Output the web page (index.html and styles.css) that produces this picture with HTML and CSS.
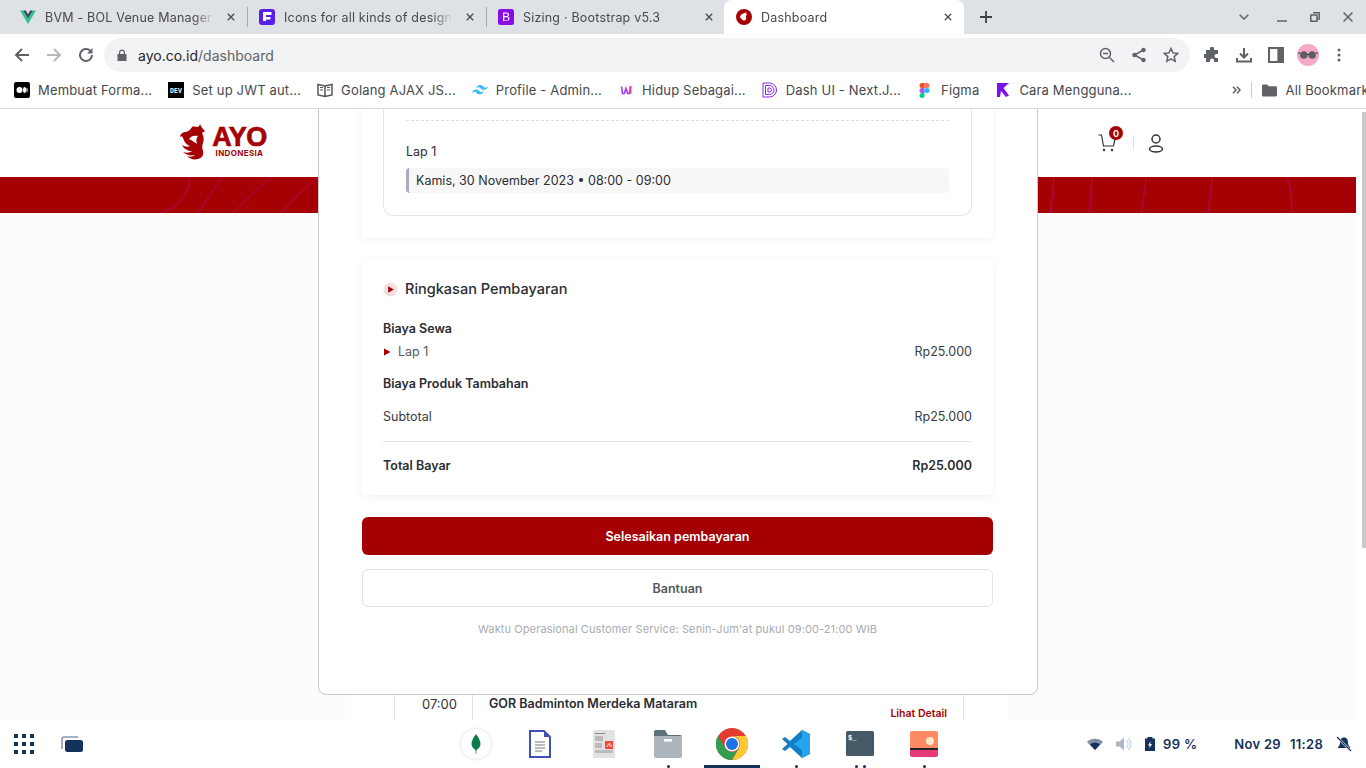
FILE: index.html
```html
<!DOCTYPE html>
<html lang="id">
<head>
<meta charset="utf-8">
<title>Dashboard</title>
<link rel="stylesheet" href="styles.css">
</head>
<body>
<div class="browser">
  <div class="tabbar">
    <div class="tab">
      <svg class="fav" viewBox="0 0 16 16"><path d="M0 1.5h3.2L8 9.5l4.8-8H16L8 15z" fill="#2fc28c"/><path d="M3.2 1.5h2.6L8 5.2l2.2-3.7h2.6L8 9.5z" fill="#34495e"/></svg>
      <span class="tab-title">BVM - BOL Venue Manager</span>
      <svg class="tab-x" viewBox="0 0 10 10"><path d="M1 1l8 8M9 1l-8 8"/></svg>
    </div>
    <i class="tab-sep"></i>
    <div class="tab">
      <svg class="fav" viewBox="0 0 16 16"><rect width="16" height="16" rx="3" fill="#5a1fe6"/><path d="M4 3h8.500v3H7v2h4.500v2.500H7V12H4z" fill="#fff"/></svg>
      <span class="tab-title">Icons for all kinds of design</span>
      <svg class="tab-x" viewBox="0 0 10 10"><path d="M1 1l8 8M9 1l-8 8"/></svg>
    </div>
    <i class="tab-sep"></i>
    <div class="tab">
      <svg class="fav" viewBox="0 0 16 16"><rect width="16" height="16" rx="2.500" fill="#8b0be8"/><path d="M5 3.500h3.600c1.500 0 2.400.8 2.400 2.100 0 .9-.5 1.600-1.300 1.800 1.100.2 1.800 1 1.800 2.100 0 1.500-1.100 2.500-2.800 2.500H5zM6.300 4.600v2.500h2c1 0 1.500-.5 1.500-1.300 0-.8-.5-1.200-1.400-1.200zM6.300 8.200v3.200h2.300c1.100 0 1.700-.6 1.700-1.600s-.7-1.600-1.900-1.600z" fill="#fff"/></svg>
      <span class="tab-title">Sizing · Bootstrap v5.3</span>
      <svg class="tab-x" viewBox="0 0 10 10"><path d="M1 1l8 8M9 1l-8 8"/></svg>
    </div>
    <div class="tab tab-active">
      <svg class="fav" viewBox="0 0 16 16"><circle cx="8" cy="8" r="8" fill="#a50104"/><path d="M4 8.500c0-2.500 2.500-4.500 6.500-5-.5 1-.2 1.500.5 2.500-1.500 0-1.500 1-1 2 .5 1.200 0 3-1.500 3.500C6.500 12 6 10 4 8.500z" fill="#fff"/></svg>
      <span class="tab-title">Dashboard</span>
      <svg class="tab-x" viewBox="0 0 10 10"><path d="M1 1l8 8M9 1l-8 8"/></svg>
    </div>
    <svg class="tab-plus" viewBox="0 0 12 12"><path d="M6 0v12M0 6h12"/></svg>
    <div class="win-controls">
      <svg class="win-icon win-chev" viewBox="0 0 10 6"><path d="M.7.7L5 5l4.300-4.300"/></svg>
      <svg class="win-icon win-min" viewBox="0 0 10 10"><path d="M0 9h10"/></svg>
      <svg class="win-icon win-max" viewBox="0 0 10 10"><path d="M3 .8h6.200V7H7M.8 3H7v6.200H.8z"/></svg>
      <svg class="win-icon win-close" viewBox="0 0 10 10"><path d="M.5.5l9 9M9.500.5l-9 9"/></svg>
    </div>
  </div>

  <div class="toolbar">
    <svg class="nav-icon" viewBox="0 0 16 16"><path class="st" d="M15 8H2M8 2L2 8l6 6"/></svg>
    <svg class="nav-icon nav-off" viewBox="0 0 16 16"><path class="st" d="M1 8h13M8 2l6 6-6 6"/></svg>
    <svg class="nav-icon" viewBox="0 0 16 16"><path class="st" d="M14 8a6 6 0 1 1-1.800-4.300"/><path d="M14.500 1v5.500H9z" fill="#5f6368"/></svg>
    <div class="omnibox">
      <svg class="lock" viewBox="0 0 10 12"><path d="M2 5V3.500a3 3 0 0 1 6 0V5h1.500v7H.5V5zm1.200 0h3.600V3.500a1.800 1.800 0 0 0-3.600 0z" fill="#5f6368"/></svg>
      <span class="url"><b>ayo.co.id</b>/dashboard</span>
      <svg class="omni-icon" viewBox="0 0 16 16"><circle class="st-thin" cx="6.500" cy="6.500" r="5"/><path class="st-thin" d="M10.200 10.200L15 15M4 6.500h5"/></svg>
      <svg class="omni-icon" viewBox="0 0 16 16"><path class="st-thin" d="M12.500 3L3.500 8l9 5"/><circle cx="12.500" cy="3" r="2.200" fill="#5f6368"/><circle cx="3.500" cy="8" r="2.200" fill="#5f6368"/><circle cx="12.500" cy="13" r="2.200" fill="#5f6368"/></svg>
      <svg class="omni-icon" viewBox="0 0 16 16"><path class="st-thin" d="M8 1.500l2 4.400 4.700.5-3.500 3.200 1 4.700L8 11.900l-4.200 2.400 1-4.700L1.300 6.400 6 5.900z"/></svg>
    </div>
    <div class="tool-actions">
      <svg class="tool-icon" viewBox="0 0 16 16"><path d="M6 1.500a2 2 0 0 1 4 0V3h4v4h-1.500a2 2 0 0 0 0 4H14v4h-4v-1.500a2 2 0 0 0-4 0V15H2v-4H.5a2 2 0 0 1 0-4H2V3h4z" fill="#5f6368"/></svg>
      <svg class="tool-icon" viewBox="0 0 16 16"><path class="st" d="M8 1v9M4 6.500L8 10.500l4-4M1 11v3.500h14V11"/></svg>
      <svg class="tool-icon" viewBox="0 0 14 14"><path d="M0 0h14v14H0zM1.800 1.800v10.400h6.400V1.800z" fill="#5f6368"/></svg>
      <svg class="avatar" viewBox="0 0 22 22"><circle cx="11" cy="11" r="11" fill="#f7a8c6"/><circle cx="6.800" cy="11" r="3.800" fill="#5b5f60"/><circle cx="15.200" cy="11" r="3.800" fill="#5b5f60"/><path d="M1 9.500l2-1M21 9.500l-2-1M10 10.500h2" stroke="#333" fill="none"/></svg>
      <svg class="tool-menu" viewBox="0 0 4 14"><circle cx="2" cy="2" r="1.500"/><circle cx="2" cy="7" r="1.500"/><circle cx="2" cy="12" r="1.500"/></svg>
    </div>
  </div>

  <div class="bookmarks">
    <span class="bm"><svg class="bm-icon" viewBox="0 0 16 16"><rect width="16" height="16" rx="2" fill="#000"/><circle cx="5.500" cy="8" r="3" fill="#fff"/><ellipse cx="10.500" cy="8" rx="1.500" ry="3" fill="#fff"/><ellipse cx="13" cy="8" rx=".6" ry="2.600" fill="#fff"/></svg>Membuat Forma...</span>
    <span class="bm"><svg class="bm-icon" viewBox="0 0 16 16"><rect width="16" height="16" fill="#000"/><text x="8" y="10.500" class="dev">DEV</text></svg>Set up JWT aut...</span>
    <span class="bm"><svg class="bm-icon" viewBox="0 0 16 16"><path d="M1 2.500l7 1.500 7-1.500v10.500l-7 1.500-7-1.500zM8 4v10.500" fill="none" stroke="#555" stroke-width="1.500"/><path d="M3 5.500h3M3 8h3M10 5.500h3M10 8h3" stroke="#555"/></svg>Golang AJAX JS...</span>
    <span class="bm"><svg class="bm-icon" viewBox="0 0 16 16"><path d="M4 6.500C4.600 4.200 6 3 8 3c3 0 3.400 2.200 5 2.600 1 .2 2-.2 3-1.300-.6 2.300-2 3.500-4 3.500-3 0-3.400-2.200-5-2.600-1-.2-2 .2-3 1.300zM0 11c.6-2.300 2-3.500 4-3.500 3 0 3.400 2.200 5 2.600 1 .2 2-.2 3-1.300-.6 2.300-2 3.500-4 3.500-3 0-3.400-2.200-5-2.600-1-.2-2 .2-3 1.300z" fill="#38bdf8"/></svg>Profile - Admin...</span>
    <span class="bm"><svg class="bm-icon" viewBox="0 0 16 16"><rect width="16" height="16" rx="2" fill="#fbfbfd"/><path d="M3.500 4.500l1 7h1.800l1.700-5 1.700 5h1.800l1-7" fill="none" stroke="#a03cf0" stroke-width="1.600"/><path d="M12.500 4v7.500" stroke="#ef2f88" stroke-width="1.600"/></svg>Hidup Sebagai...</span>
    <span class="bm"><svg class="bm-icon" viewBox="0 0 16 16"><path d="M1 1h6.500a7 7 0 0 1 0 14H1zM3.500 3.500h4a4.500 4.500 0 0 1 0 9h-4zM6 6h1.500a2 2 0 0 1 0 4H6z" fill="none" stroke="#8a27f0" stroke-width="1"/></svg>Dash UI - Next.J...</span>
    <span class="bm"><svg class="bm-icon bm-figma" viewBox="0 0 10 15"><path d="M5 0H2.500a2.500 2.500 0 0 0 0 5H5z" fill="#f24e1e"/><path d="M5 0h2.500a2.500 2.500 0 0 1 0 5H5z" fill="#ff7262"/><path d="M5 5H2.500a2.500 2.500 0 0 0 0 5H5z" fill="#a259ff"/><circle cx="7.500" cy="7.500" r="2.500" fill="#1abcfe"/><path d="M5 10H2.500A2.500 2.500 0 1 0 5 12.500z" fill="#0acf83"/></svg>Figma</span>
    <span class="bm"><svg class="bm-icon" viewBox="0 0 16 16"><path d="M2 1h12L8.500 6 14 13.500 11 15 6 9l-1 6H2z" fill="#7a12f0"/></svg>Cara Mengguna...</span>
    <svg class="bm-more" viewBox="0 0 9 8"><path d="M1 .7L4 4 1 7.300M5 .7L8 4 5 7.300"/></svg>
    <i class="bm-sep"></i>
    <span class="bm bm-all"><svg class="bm-folder" viewBox="0 0 16 13"><path d="M0 1.500A1.500 1.500 0 0 1 1.500 0h4L7 2h7.500A1.500 1.500 0 0 1 16 3.500v8a1.500 1.500 0 0 1-1.500 1.500h-13A1.500 1.500 0 0 1 0 11.500z" fill="#5f6368"/></svg>All Bookmarks</span>
  </div>

  <div class="viewport">
    <div class="page">
      <header class="site-header">
        <div class="logo">
          <svg class="logo-bird" viewBox="0 0 28 36"><path d="M20 0c1 3 3 5 5 7l-3 2c2 4 2 7 1 10-1 2-1 5 0 8 1 4-1 7-5 8-4 1-8 0-11-3 3 1 6 1 8-1-4 1-9 0-12-3 3 1 7 1 9-1-4 0-8-2-10-6 3 2 6 2 8 1-3-1-6-4-7-8-1-2-2-2-3-1 0-3 3-5 6-5 3-1 5-3 6-5 2-1 4 0 6 0 1-1 2-2 2-3z" fill="#a50104"/><path d="M9 15c2-3 5-4 9-3-2 2-2 5-1 8-3-2-5-4-8-5z" fill="#fff"/></svg>
          <div class="logo-text"><span class="logo-ayo">AYO</span><span class="logo-sub">INDONESIA</span></div>
        </div>
        <div class="header-actions">
          <span class="cart">
            <svg class="cart-icon" viewBox="0 0 18 18"><path d="M.5 1h3l2 11h10l1.500-7" fill="none" stroke="#333" stroke-width="1.200"/><circle cx="6" cy="16" r="1.200" fill="#333"/><circle cx="14" cy="16" r="1.200" fill="#333"/></svg>
            <span class="badge">0</span>
          </span>
          <i class="header-sep"></i>
          <svg class="user-icon" viewBox="0 0 16 19"><circle cx="8" cy="5" r="4" fill="none" stroke="#333" stroke-width="1.500"/><ellipse cx="8" cy="15" rx="6.500" ry="3" fill="none" stroke="#333" stroke-width="1.500"/></svg>
        </div>
      </header>
      <div class="band">
        <svg class="band-lines" viewBox="0 0 1356 36" preserveAspectRatio="none"><path d="M160 36c20-6 28-20 30-36M198 36c8-12 16-24 24-36M233 36c12-12 24-24 38-36M280 36c12-12 24-24 38-36M1050 36c2-12 3-24 4-36M1090 36c0-12 1-24 2-36M1141 36c2-12 4-24 5-36M1208 36c2-12 3-24 4-36M1291 36c2-12 0-24-4-36" fill="none" stroke="#b3065c" stroke-width="1"/></svg>
      </div>
      <section class="list-card">
        <div class="list-row">
          <span class="list-time">07:00</span>
          <div class="list-main">GOR Badminton Merdeka Mataram</div>
          <a class="list-link">Lihat Detail</a>
        </div>
      </section>
    </div>

    <div class="modal">
      <div class="panel panel-top">
        <div class="booking-box">
          <div class="dashed"></div>
          <div class="court">Lap 1</div>
          <div class="slot">Kamis, 30 November 2023 • 08:00 - 09:00</div>
        </div>
      </div>
      <div class="panel panel-summary">
        <h2 class="summary-title"><svg class="dot-icon" viewBox="0 0 16 16"><circle cx="8" cy="8" r="7.500" fill="#f5dfe0"/><path d="M5.500 4.500L11.500 8l-6 3.500z" fill="#a50104"/></svg>Ringkasan Pembayaran</h2>
        <div class="sum-head sum-first">Biaya Sewa</div>
        <div class="sum-row sum-item"><span class="sum-lap"><svg class="tri" viewBox="0 0 8 8"><path d="M1 .5L7.500 4 1 7.500z" fill="#a50104"/></svg>Lap 1</span><span>Rp25.000</span></div>
        <div class="sum-head sum-second">Biaya Produk Tambahan</div>
        <div class="sum-row sum-sub"><span>Subtotal</span><span>Rp25.000</span></div>
        <div class="sum-row sum-total"><span>Total Bayar</span><span>Rp25.000</span></div>
      </div>
      <button class="btn btn-pay">Selesaikan pembayaran</button>
      <button class="btn btn-help">Bantuan</button>
      <p class="note">Waktu Operasional Customer Service: Senin-Jum'at pukul 09:00-21:00 WIB</p>
    </div>

    <div class="scrollbar"><i class="thumb"></i></div>
  </div>

  <footer class="taskbar">
    <div class="task-left">
      <svg class="grid-icon" viewBox="0 0 20 20"><g fill="#14335a"><rect width="4" height="4"/><rect x="8" width="4" height="4"/><rect x="16" width="4" height="4"/><rect y="8" width="4" height="4"/><rect x="8" y="8" width="4" height="4"/><rect x="16" y="8" width="4" height="4"/><rect y="16" width="4" height="4"/><rect x="8" y="16" width="4" height="4"/><rect x="16" y="16" width="4" height="4"/></g></svg>
      <svg class="win-stack" viewBox="0 0 22 16"><path d="M1 13V3a2 2 0 0 1 2-2h14" fill="none" stroke="#8797ab" stroke-width="1.500"/><rect x="4" y="4" width="18" height="12" rx="2.500" fill="#14335a"/></svg>
    </div>
    <div class="dock">
      <span class="dock-item"><span class="mongo"><svg viewBox="0 0 10 20"><path d="M5 0c3 4 4.500 7 4.500 10S7 15 5.500 16L5.200 20h-.5L4.500 16C3 15 .5 13 .5 10S2 4 5 0z" fill="#0f7a4d"/></svg></span></span>
      <span class="dock-item"><svg class="dock-svg" viewBox="0 0 22 28"><path d="M1 1h14l6 6v20H1z" fill="#fff" stroke="#4050b5" stroke-width="2"/><path d="M15 1l6 6h-6z" fill="#4050b5"/><path d="M6 12h10M6 15h10M6 18h10M6 21h7" stroke="#777"/></svg></span>
      <span class="dock-item"><svg class="dock-svg" viewBox="0 0 22 28"><rect width="22" height="28" rx="1.500" fill="#e2e2e2"/><path d="M2 3h10v1H2z" fill="#888"/><path d="M2 6h8v5H2zM2 13h7v5H2zM2 20h18v3H2z" fill="#bbb"/><rect x="12" y="11" width="8" height="8" fill="#f2473a"/><path d="M14 17c1-3 3-5 3-3s-2 2 2 2" stroke="#fff" fill="none"/></svg></span>
      <span class="dock-item dock-dot"><svg class="dock-svg dock-wide" viewBox="0 0 28 28"><path d="M0 2a2 2 0 0 1 2-2h9l3 5h12a2 2 0 0 1 2 2v6H0z" fill="#5d707d"/><path d="M0 6h28v20a2 2 0 0 1-2 2H2a2 2 0 0 1-2-2z" fill="#acb6bc"/><rect x="10" y="9" width="8" height="2.500" fill="#fff"/></svg></span>
      <span class="dock-item dock-active"><svg class="dock-chrome" viewBox="0 0 32 32"><circle cx="16" cy="16" r="16" fill="#e33b2e"/><path d="M16 32A16 16 0 0 0 29.900 8H16a8 8 0 0 1 6.900 12z" fill="#fcc934"/><path d="M2.100 8A16 16 0 0 0 16 32l6.900-12A8 8 0 0 1 9.100 20z" fill="#319f4f"/><circle cx="16" cy="16" r="7.500" fill="#fff"/><circle cx="16" cy="16" r="6" fill="#1a73e8"/></svg></span>
      <span class="dock-item dock-dot"><svg class="dock-svg dock-wide" viewBox="0 0 28 28"><path d="M20 0l8 4v20l-8 4L8 17l-5 4-3-2 5.500-5L0 9l3-2 5 4z" fill="#0f7fc7"/><path d="M20 0l8 4v20l-8 4zM20 7.500L12 14l8 6.500z" fill="#26a4ee" fill-rule="evenodd"/></svg></span>
      <span class="dock-item dock-dots"><svg class="dock-svg dock-wide" viewBox="0 0 28 26"><rect width="28" height="25" rx="1.500" fill="#455a66"/><text x="2" y="9" class="term">$_</text></svg></span>
      <span class="dock-item dock-dot"><svg class="dock-svg dock-wide" viewBox="0 0 28 26"><path d="M0 2a2 2 0 0 1 2-2h24a2 2 0 0 1 2 2v15H0z" fill="#ff8a65"/><circle cx="20" cy="10" r="4" fill="#ffe9c8"/><path d="M0 17h28v3H0z" fill="#222"/><path d="M0 19h28v5a2 2 0 0 1-2 2H2a2 2 0 0 1-2-2z" fill="#e63a78"/></svg></span>
    </div>
    <div class="tray">
      <svg class="tray-wifi" viewBox="0 0 16 12"><path d="M0 4a11.500 11.500 0 0 1 16 0l-8 8z" fill="#14335a" opacity=".55"/><path d="M3 6.500a7 7 0 0 1 10 0l-5 5.500z" fill="#14335a"/></svg>
      <svg class="tray-vol" viewBox="0 0 16 14"><path d="M0 4.500h3.500L8 .5v13l-4.500-4H0z" fill="#acb8c5"/><path d="M10.500 3.500a4.500 4.500 0 0 1 0 7M12.500 1.500a7.500 7.500 0 0 1 0 11" fill="none" stroke="#c9d2db" stroke-width="1.300"/></svg>
      <svg class="tray-batt" viewBox="0 0 10 14"><path d="M2.500 0h5v1.500H10V14H0V1.500h2.500z" fill="#14335a"/><path d="M5.800 4L3 8.500h1.800L4.200 11.500 7 7H5.200z" fill="#fff"/></svg>
      <span class="tray-pct">99 %</span>
      <span class="tray-date">Nov 29</span>
      <span class="tray-time">11:28</span>
      <svg class="tray-bell" viewBox="0 0 16 16"><path d="M8 1.500c3 0 4 2.500 4 5 0 2 .7 3.500 2 4.500v1H2v-1c1.300-1 2-2.500 2-4.500 0-2.500 1-5 4-5z" fill="#14335a"/><path d="M1 1l14 14" stroke="#fff" stroke-width="2.400"/><path d="M1 1l14 14" stroke="#14335a" stroke-width="1.200"/></svg>
    </div>
  </footer>
</div>
</body>
</html>
```

FILE: styles.css
```css
* { box-sizing: border-box; }
html, body { margin: 0; padding: 0; height: 100%; overflow: hidden; }
body { font-family: Inter, "Liberation Sans", sans-serif; color: #2b2d33; background: #fff; }
svg { display: block; flex: none; }
i { font-style: normal; }
.browser { width: 1366px; height: 768px; display: flex; flex-direction: column; }

.tabbar { height: 34px; background: #dee1e6; display: flex; align-items: center; flex: none; }
.tab { width: 239px; height: 34px; flex: none; display: flex; align-items: center; padding: 0 9px 0 20px; gap: 9px; }
.tab + .tab-sep + .tab { width: 238px; padding-left: 11px; }
.tab-sep { width: 1px; height: 20px; background: #a9abb0; flex: none; }
.tab:first-child { width: 247px; }
.fav { width: 16px; height: 16px; }
.tab-title { flex: 1; font-size: 12.5px; letter-spacing: .2px; color: #45484d; white-space: nowrap; overflow: hidden; -webkit-mask-image: linear-gradient(90deg, #000 88%, transparent 100%); mask-image: linear-gradient(90deg, #000 88%, transparent 100%); }
.tab-x { width: 8px; height: 8px; fill: none; stroke: #45484d; stroke-width: 1.600; margin: 0 3px 0 4px; }
.tab-active { background: #fff; width: 240px !important; padding-left: 12px !important; border-radius: 8px 8px 0 0; margin-left: -1px; }
.tab-plus { width: 12px; height: 12px; margin-left: 16px; fill: none; stroke: #3c4043; stroke-width: 1.800; }
.win-controls { margin-left: auto; display: flex; align-items: center; padding-right: 13px; }
.win-icon { fill: none; stroke: #5f6368; stroke-width: 1.500; }
.win-chev { width: 10px; height: 6px; margin-right: 28px; }
.win-min { width: 10px; height: 10px; margin-right: 23px; }
.win-max { width: 10px; height: 10px; margin-right: 23px; }
.win-close { width: 10px; height: 10px; }

.toolbar { height: 38px; margin-top: 0; padding-top: 0; background: #fff; display: flex; align-items: center; flex: none; padding-left: 14px; border-top: 4px solid #fff; }
.st { fill: none; stroke: #5f6368; stroke-width: 2; }
.st-thin { fill: none; stroke: #5f6368; stroke-width: 1.500; }
.nav-icon { width: 16px; height: 16px; margin-right: 16px; }
.nav-off { opacity: .45; }
.omnibox { width: 1086px; height: 34px; margin-left: -6px; background: #f1f3f4; border-radius: 17px; display: flex; align-items: center; padding: 0 11px 0 13px; }
.lock { width: 10px; height: 12px; margin-right: 11px; }
.url { flex: 1; font-size: 14px; color: #5f6368; }
.url b { font-weight: 400; color: #24262a; }
.omni-icon { width: 16px; height: 16px; margin-left: 16px; }
.tool-actions { display: flex; align-items: center; margin-left: 14px; }
.tool-icon { width: 16px; height: 16px; margin-right: 16px; }
.avatar { width: 22px; height: 22px; margin-right: 18px; margin-left: -3px; }
.tool-menu { width: 4px; height: 14px; fill: #5f6368; }

.bookmarks { height: 37px; background: #fff; border-bottom: 1px solid #dadce0; display: flex; align-items: center; flex: none; padding-left: 14px; font-size: 13px; color: #45484d; }
.bm { display: flex; align-items: center; gap: 8px; white-space: nowrap; margin-right: 16px; letter-spacing: .17px; }
.bm-icon { width: 16px; height: 16px; }
.bm-figma { width: 11px; height: 15px; margin-left: 2px; margin-right: 3px; }
.dev { font: 700 6.500px "Liberation Mono", monospace; fill: #fff; text-anchor: middle; }
.bm-more { width: 9px; height: 8px; margin-left: 84px; fill: none; stroke: #5f6368; stroke-width: 1.500; }
.bm-sep { width: 1px; height: 16px; background: #c8cacc; margin: 0 10px; flex: none; }
.bm-folder { width: 15px; height: 13px; }
.bm-all { margin: 0; gap: 9px; }

.viewport { flex: 1; position: relative; overflow: hidden; min-height: 0; }
.page { width: 1356px; height: 100%; background: #fcfcfc; display: flex; flex-direction: column; }
.site-header { height: 68px; background: #fff; flex: none; display: flex; align-items: center; padding-left: 180px; padding-right: 192px; }
.logo { display: flex; align-items: center; gap: 2px; color: #a50104; margin-top: -2px; }
.logo-bird { width: 28px; height: 36px; }
.logo-text { display: flex; flex-direction: column; align-items: center; width: 59px; }
.logo-ayo { font: 700 27px/22px "Liberation Sans", sans-serif; -webkit-text-stroke: .7px #a50104; letter-spacing: -.5px; }
.logo-sub { font: 700 8px/10px Inter, sans-serif; letter-spacing: .35px; white-space: nowrap; }
.header-actions { margin-left: auto; display: flex; align-items: center; }
.cart { position: relative; display: block; }
.cart-icon { width: 18px; height: 18px; }
.badge { position: absolute; left: 11px; top: -8px; width: 14px; height: 14px; border-radius: 50%; background: #a50104; color: #fff; font-size: 9px; font-weight: 700; display: flex; align-items: center; justify-content: center; }
.header-sep { width: 1px; height: 14px; background: #e2e2e2; margin: 0 14px 0 17px; }
.user-icon { width: 16px; height: 19px; }
.band { height: 36px; flex: none; background: #a50104; position: relative; }
.band-lines { width: 100%; height: 100%; }
.list-card { margin: auto 348px 0 351px; height: 25px; background: #fff; padding: 0 44px 0 43px; flex: none; }
.list-row { height: 100%; display: flex; border-left: 1px solid #e2e2e2; border-right: 1px solid #e2e2e2; position: relative; }
.list-time { width: 78px; border-right: 1px solid #e2e2e2; text-align: right; padding: 1px 15px 0 0; font-size: 13px; color: #333; }
.list-main { flex: 1; padding: 1px 0 0 16px; font-size: 12.500px; font-weight: 600; color: #2b2d33; }
.list-link { align-self: flex-end; padding-right: 16px; font-size: 10.500px; font-weight: 600; color: #a50104; line-height: 13px; }

.modal { position: absolute; left: 318px; top: -20px; bottom: 25px; width: 720px; background: #fff; border: 1px solid #c9c9c9; border-radius: 8px; display: flex; flex-direction: column; justify-content: flex-end; padding: 0 44px 58px 43px; }
.panel { background: #fff; border-radius: 4px; box-shadow: 0 2px 10px rgba(0,0,0,.06); padding: 0 21px; }
.panel-top { padding-bottom: 22px; margin-bottom: 21px; }
.booking-box { border: 1px solid #e4e4e4; border-top: none; border-radius: 0 0 10px 10px; padding: 0 22px 22px; height: 125px; display: flex; flex-direction: column; justify-content: flex-end; }
.dashed { border-top: 1px dashed #e0e0e0; margin-bottom: 22px; }
.court { font-size: 12.500px; color: #2b2d33; line-height: 17px; margin-bottom: 8px; }
.slot { height: 25px; background: #f7f7f8; border-left: 3px solid #a9adb8; border-radius: 4px; padding-left: 7px; display: flex; align-items: center; font-size: 12.500px; color: #2b2d33; }
.panel-summary { padding-top: 20px; padding-bottom: 20px; height: 236px; margin-bottom: 22px; }
.summary-title { margin: 0; font-size: 14.500px; font-weight: 500; line-height: 20px; color: #2b2d33; display: flex; align-items: center; gap: 7px; }
.dot-icon { width: 15px; height: 15px; }
.sum-head { font-size: 12.500px; font-weight: 600; line-height: 16px; color: #2b2d33; }
.sum-first { margin-top: 22px; }
.sum-row { display: flex; justify-content: space-between; font-size: 12.500px; line-height: 16px; color: #3a3c42; }
.sum-item { margin-top: 7px; color: #55585e; }
.sum-item span:last-child, .sum-sub { color: #3a3c42; }
.sum-lap { display: flex; align-items: center; gap: 7px; }
.tri { width: 8px; height: 8px; }
.sum-second { margin-top: 16px; }
.sum-sub { margin-top: 17px; padding-bottom: 16px; border-bottom: 1px solid #e4e4e4; }
.sum-total { margin-top: 16px; font-weight: 600; color: #2b2d33; }
.btn { display: block; width: 631px; height: 38px; border-radius: 6px; font: 600 12.500px Inter, sans-serif; padding: 0; flex: none; }
.btn-pay { background: #a50104; border: none; color: #fff; margin-bottom: 14px; }
.btn-help { background: #fff; border: 1px solid #e4e4e4; color: #55585e; margin-bottom: 15px; }
.note { margin: 0; text-align: center; font-size: 11px; line-height: 14px; color: #a9abb2; letter-spacing: .1px; }

.scrollbar { position: absolute; right: 0; top: 0; bottom: 0; width: 10px; background: #fff; }
.thumb { position: absolute; right: 0; top: 3px; width: 4px; height: 436px; background: #c9c9c9; }

.taskbar { height: 48px; background: #fff; flex: none; display: flex; align-items: center; position: relative; padding: 0 14px; }
.task-left { display: flex; align-items: center; gap: 27px; width: 430px; }
.grid-icon { width: 20px; height: 20px; }
.win-stack { width: 22px; height: 16px; }
.dock { display: flex; align-items: stretch; height: 48px; }
.dock-item { width: 64px; display: flex; align-items: center; justify-content: center; position: relative; }
.mongo { width: 30px; height: 30px; border-radius: 50%; background: #fff; box-shadow: 0 0 3px rgba(0,0,0,.18); display: flex; align-items: center; justify-content: center; }
.mongo svg { width: 10px; height: 20px; }
.dock-svg { width: 22px; height: 28px; }
.dock-wide { width: 28px; height: 28px; }
.dock-chrome { width: 32px; height: 32px; }
.dock-active::after { content: ""; position: absolute; left: 4px; right: 4px; bottom: 0; height: 3px; background: #14335a; }
.dock-dot::after { content: ""; position: absolute; left: 50%; bottom: 0; width: 3px; height: 3px; margin-left: -1px; border-radius: 50%; background: #14335a; }
.dock-dots::after { content: ""; position: absolute; left: 50%; bottom: 0; width: 3px; height: 3px; margin-left: -5px; border-radius: 50%; background: #14335a; box-shadow: 8px 0 0 #14335a; }
.term { font: 700 7px "Liberation Mono", monospace; fill: #fff; }
.tray { margin-left: auto; display: flex; align-items: center; color: #14335a; font-weight: 600; font-size: 13px; letter-spacing: .3px; }
.tray-wifi { width: 16px; height: 12px; margin-right: 13px; }
.tray-vol { width: 16px; height: 14px; margin-right: 13px; }
.tray-batt { width: 10px; height: 14px; margin-right: 8px; }
.tray-pct { margin-right: 37px; }
.tray-date { margin-right: 9px; }
.tray-time { margin-right: 13px; }
.tray-bell { width: 16px; height: 16px; }
```
